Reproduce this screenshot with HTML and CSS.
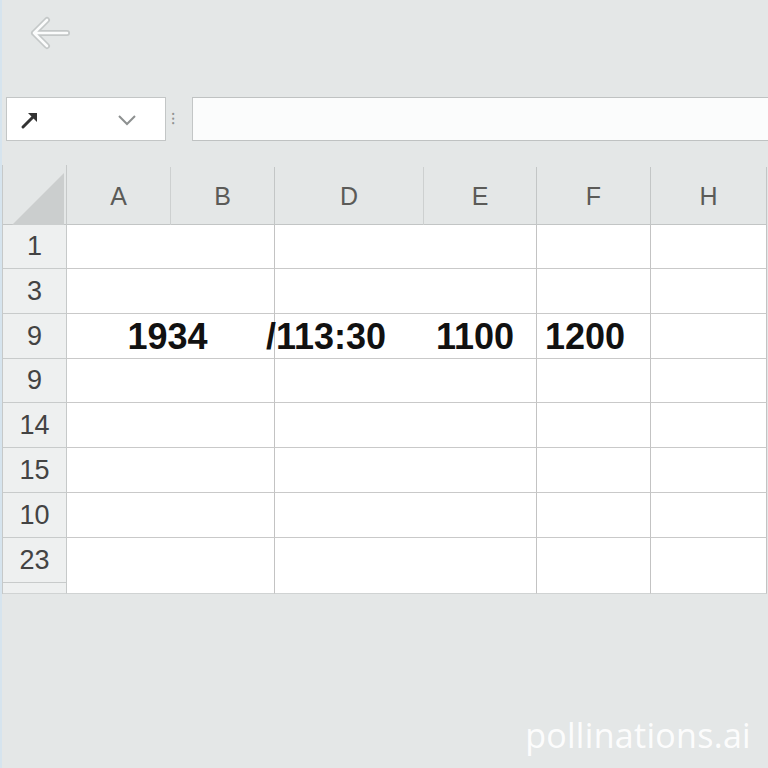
FILE: index.html
```html
<!DOCTYPE html>
<html>
	<head>
		<meta charset="UTF-8">
		<title>Sheet</title>
		<link rel="stylesheet" href="styles.css">
	</head>
	<body>
		<div class="topbar">
			<svg class="back" width="42" height="34" viewBox="0 0 42 34">
				<path d="M18 4 L5 17 L18 30 M5 17 L38 17" fill="none" stroke="#c4c8c8" stroke-width="6" stroke-linecap="round" stroke-linejoin="round"/>
				<path d="M18 4 L5 17 L18 30 M5 17 L38 17" fill="none" stroke="#fbfcfc" stroke-width="2.6" stroke-linecap="round" stroke-linejoin="round"/>
			</svg>
		</div>

		<div class="formula">
			<div class="namebox">
				<svg class="jump" width="20" height="20" viewBox="0 0 20 20">
					<path d="M3 17 L13 7" stroke="#333" stroke-width="3" stroke-linecap="round"/>
					<path d="M8 3 L17 3 L17 12 Z" fill="#333"/>
				</svg>
				<svg class="chev" width="20" height="12" viewBox="0 0 20 12">
					<path d="M2 2 L10 10 L18 2" fill="none" stroke="#8d9090" stroke-width="2"/>
				</svg>
			</div>
			<span class="dots">&#8285;</span>
			<div class="fx"></div>
		</div>

		<div class="sheet">
			<div class="heads">
				<div class="corner"><span class="tri"></span></div>
				<div class="head">A</div>
				<div class="head">B</div>
				<div class="head">D</div>
				<div class="head">E</div>
				<div class="head">F</div>
				<div class="head">H</div>
			</div>

			<div class="row">
				<div class="num">1</div><div class="cell"></div><div class="cell"></div><div class="cell"></div><div class="cell"></div>
			</div>
			<div class="row r45">
				<div class="num">3</div><div class="cell"></div><div class="cell"></div><div class="cell"></div><div class="cell"></div>
			</div>
			<div class="row r45">
				<div class="num">9</div>
				<div class="cell val center">1934</div>
				<div class="cell val split"><span class="slash">/113:30</span><span>1100</span></div>
				<div class="cell val start">1200</div>
				<div class="cell"></div>
			</div>
			<div class="row">
				<div class="num">9</div><div class="cell"></div><div class="cell"></div><div class="cell"></div><div class="cell"></div>
			</div>
			<div class="row r45">
				<div class="num">14</div><div class="cell"></div><div class="cell"></div><div class="cell"></div><div class="cell"></div>
			</div>
			<div class="row r45">
				<div class="num">15</div><div class="cell"></div><div class="cell"></div><div class="cell"></div><div class="cell"></div>
			</div>
			<div class="row r45">
				<div class="num">10</div><div class="cell"></div><div class="cell"></div><div class="cell"></div><div class="cell"></div>
			</div>
			<div class="row last">
				<div class="num tail">23</div><div class="cell"></div><div class="cell"></div><div class="cell"></div><div class="cell"></div>
			</div>
		</div>

		<div class="mark">pollinations.ai</div>
	</body>
</html>
```

FILE: styles.css
```css
body {
	margin: 0;
	padding: 0;
	background: #e4e7e7;
	font-family: "Liberation Sans", Arial, sans-serif;
	height: 768px;
	overflow: hidden;
	border-left: 2px solid #d6e4ee;
	box-sizing: border-box;
}

.topbar {
	height: 97px;
	padding: 16px 0 0 27px;
	box-sizing: border-box;
}

.back {
	display: block;
}

.formula {
	display: flex;
	align-items: stretch;
	height: 44px;
	margin-left: 4px;
}

.namebox {
	width: 160px;
	background: #fff;
	border: 1px solid #c3c6c6;
	box-sizing: border-box;
	display: flex;
	align-items: center;
	justify-content: space-between;
	padding: 0 28px 0 13px;
}

.jump {
	margin-top: 2px;
}

.chev {
	margin-top: 2px;
}

.dots {
	width: 26px;
	box-sizing: border-box;
	padding-left: 5px;
	color: #8e9191;
	font-size: 16px;
	line-height: 44px;
}

.fx {
	flex: 1;
	background: #fbfcfc;
	border-top: 1px solid #bfc2c2;
	border-bottom: 1px solid #bfc2c2;
	border-left: 1px solid #c3c6c6;
}

.sheet {
	margin-top: 24px;
	width: 765px;
	border-left: 1px solid #c6c9c9;
	box-sizing: border-box;
}

.heads {
	display: grid;
	grid-template-columns: 64px 104px 104px 149px 113px 114px 116px;
	height: 60px;
	border-bottom: 1px solid #c2c5c5;
	box-sizing: border-box;
}

.corner {
	position: relative;
	border-right: 1px solid #c6c9c9;
}

.tri {
	position: absolute;
	right: 2px;
	bottom: 3px;
	width: 0;
	height: 0;
	border-left: 52px solid transparent;
	border-bottom: 52px solid #cbcece;
}

.head {
	border-right: 1px solid #cdd0d0;
	margin: 2px 0 3px;
	text-align: center;
	font-size: 25px;
	line-height: 58px;
	color: #5b5b58;
}

.head:nth-child(3),
.head:nth-child(5),
.head:nth-child(6),
.head:last-child {
	border-right-color: #c3c6c6;
}

.row {
	display: grid;
	grid-template-columns: 64px 208px 262px 114px 116px;
	height: 44px;
}

.r45 {
	height: 45px;
}

.last {
	height: 56px;
}

.num {
	background: #eef0f0;
	border-right: 1px solid #c6c9c9;
	border-bottom: 1px solid #c8cbcb;
	font-size: 27px;
	color: #434343;
	display: flex;
	align-items: center;
	justify-content: center;
}

.tail {
	align-items: flex-start;
	padding-top: 7px;
	position: relative;
}

.tail::after {
	content: "";
	position: absolute;
	left: 0;
	right: 0;
	bottom: 10px;
	border-top: 1px solid #c8cbcb;
}

.cell {
	background: #fff;
	border-right: 1px solid #c3c3c3;
	border-bottom: 1px solid #c9c9c9;
}

.last .cell,
.last .num {
	border-bottom: 1px solid #d0d3d3;
}

.val {
	font-weight: bold;
	font-size: 36px;
	color: #111;
	display: flex;
	align-items: center;
	padding-top: 2px;
}

.center {
	justify-content: center;
	padding-right: 6px;
}

.start {
	padding-left: 8px;
}

.split {
	justify-content: space-between;
	padding-right: 22px;
}

.slash {
	margin-left: -9px;
}

.mark {
	text-align: right;
	padding: 118px 17px 0 0;
	font-family: "Open Sans", "Liberation Sans", sans-serif;
	font-size: 34px;
	color: rgba(255, 255, 255, 0.92);
	letter-spacing: 0.3px;
}
```
